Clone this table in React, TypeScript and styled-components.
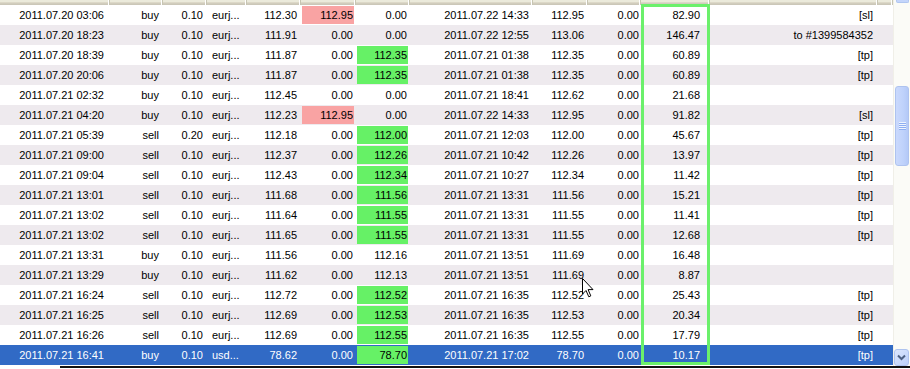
import styled, { createGlobalStyle } from 'styled-components';

type Mark = 'sl' | 'tp' | undefined;

interface Deal {
  open: string;
  type: string;
  size: string;
  symbol: string;
  price: string;
  sl: string;
  slMark?: boolean;
  tp: string;
  tpMark?: boolean;
  close: string;
  closePrice: string;
  swap: string;
  profit: string;
  comment: string;
}

const GlobalStyle = createGlobalStyle`
  html, body {
    margin: 0;
    padding: 0;
    background: #fff;
  }
  body {
    width: 910px;
    height: 369px;
    overflow: hidden;
    font-family: "Liberation Sans", Arial, sans-serif;
    font-size: 11px;
    color: #000;
  }
`;

const COLS = '110px 53px 44px 40px 54px 55px 54px 123px 55px 53px 69px 168px';

const d = (
  open: string, type: string, size: string, symbol: string, price: string,
  sl: string, tp: string, close: string, closePrice: string, profit: string,
  comment: string, mark?: Mark,
): Deal => ({
  open, type, size, symbol, price, sl, tp, close, closePrice,
  swap: '0.00', profit, comment,
  slMark: mark === 'sl', tpMark: mark === 'tp',
});

const deals: Deal[] = [
  d('2011.07.20 03:06', 'buy', '0.10', 'eurj...', '112.30', '112.95', '0.00', '2011.07.22 14:33', '112.95', '82.90', '[sl]', 'sl'),
  d('2011.07.20 18:23', 'buy', '0.10', 'eurj...', '111.91', '0.00', '0.00', '2011.07.22 12:55', '113.06', '146.47', 'to #1399584352'),
  d('2011.07.20 18:39', 'buy', '0.10', 'eurj...', '111.87', '0.00', '112.35', '2011.07.21 01:38', '112.35', '60.89', '[tp]', 'tp'),
  d('2011.07.20 20:06', 'buy', '0.10', 'eurj...', '111.87', '0.00', '112.35', '2011.07.21 01:38', '112.35', '60.89', '[tp]', 'tp'),
  d('2011.07.21 02:32', 'buy', '0.10', 'eurj...', '112.45', '0.00', '0.00', '2011.07.21 18:41', '112.62', '21.68', ''),
  d('2011.07.21 04:20', 'buy', '0.10', 'eurj...', '112.23', '112.95', '0.00', '2011.07.22 14:33', '112.95', '91.82', '[sl]', 'sl'),
  d('2011.07.21 05:39', 'sell', '0.20', 'eurj...', '112.18', '0.00', '112.00', '2011.07.21 12:03', '112.00', '45.67', '[tp]', 'tp'),
  d('2011.07.21 09:00', 'sell', '0.10', 'eurj...', '112.37', '0.00', '112.26', '2011.07.21 10:42', '112.26', '13.97', '[tp]', 'tp'),
  d('2011.07.21 09:04', 'sell', '0.10', 'eurj...', '112.43', '0.00', '112.34', '2011.07.21 10:27', '112.34', '11.42', '[tp]', 'tp'),
  d('2011.07.21 13:01', 'sell', '0.10', 'eurj...', '111.68', '0.00', '111.56', '2011.07.21 13:31', '111.56', '15.21', '[tp]', 'tp'),
  d('2011.07.21 13:02', 'sell', '0.10', 'eurj...', '111.64', '0.00', '111.55', '2011.07.21 13:31', '111.55', '11.41', '[tp]', 'tp'),
  d('2011.07.21 13:02', 'sell', '0.10', 'eurj...', '111.65', '0.00', '111.55', '2011.07.21 13:31', '111.55', '12.68', '[tp]', 'tp'),
  d('2011.07.21 13:31', 'buy', '0.10', 'eurj...', '111.56', '0.00', '112.16', '2011.07.21 13:51', '111.69', '16.48', ''),
  d('2011.07.21 13:29', 'buy', '0.10', 'eurj...', '111.62', '0.00', '112.13', '2011.07.21 13:51', '111.69', '8.87', ''),
  d('2011.07.21 16:24', 'sell', '0.10', 'eurj...', '112.72', '0.00', '112.52', '2011.07.21 16:35', '112.52', '25.43', '[tp]', 'tp'),
  d('2011.07.21 16:25', 'sell', '0.10', 'eurj...', '112.69', '0.00', '112.53', '2011.07.21 16:35', '112.53', '20.34', '[tp]', 'tp'),
  d('2011.07.21 16:26', 'sell', '0.10', 'eurj...', '112.69', '0.00', '112.55', '2011.07.21 16:35', '112.55', '17.79', '[tp]', 'tp'),
  d('2011.07.21 16:41', 'buy', '0.10', 'usd...', '78.62', '0.00', '78.70', '2011.07.21 17:02', '78.70', '10.17', '[tp]', 'tp'),
];

const SELECTED = 17;

export default function App() {
  return (
    <>
      <GlobalStyle />
      <Window>
        <Main>
          <ListArea>
            <Header>
              {Array.from({ length: 13 }).map((_, i) => <HeaderCell key={i} />)}
            </Header>
            {deals.map((r, i) => {
              const sel = i === SELECTED;
              return (
                <Row key={i} $alt={i % 2 === 1} $selected={sel}>
                  <Cell $pr={6}>{r.open}</Cell>
                  <Cell $pr={4}>{r.type}</Cell>
                  <Cell $pr={4}>{r.size}</Cell>
                  <Cell $align="left" $pl={5}>{r.symbol}</Cell>
                  <Cell $pr={4}>{r.price}</Cell>
                  {r.slMark ? (
                    <MarkCell><Marked $kind="sl">{r.sl}</Marked></MarkCell>
                  ) : (
                    <Cell $pr={3}>{r.sl}</Cell>
                  )}
                  {r.tpMark ? (
                    <MarkCell><Marked $kind="tp">{r.tp}</Marked></MarkCell>
                  ) : (
                    <Cell $pr={3}>{r.tp}</Cell>
                  )}
                  <Cell $pr={4}>{r.close}</Cell>
                  <Cell $pr={4}>{r.closePrice}</Cell>
                  <Cell $pr={2}>{r.swap}</Cell>
                  <Cell $pr={10}>{r.profit}</Cell>
                  <Cell $pr={5}>{r.comment}</Cell>
                </Row>
              );
            })}
            <ProfitFrame />
            <Cursor width="12" height="20" viewBox="0 0 12 20">
              <path d="M0.5 0.5 L0.5 16 L4 12.5 L6.8 18.8 L8.8 17.9 L6.1 11.6 L11 11.6 Z"
                fill="#fff" stroke="#000" strokeWidth="1" strokeLinejoin="miter" />
            </Cursor>
          </ListArea>
          <Scrollbar>
            <ArrowStub />
            <Thumb>
              <Grip><i /><i /><i /><i /></Grip>
            </Thumb>
            <TrackFill />
            <ArrowButton>
              <svg width="9" height="7" viewBox="0 0 9 7">
                <path d="M1 1.5 L4.5 5 L8 1.5" fill="none" stroke="#4D6185" strokeWidth="2" />
              </svg>
            </ArrowButton>
          </Scrollbar>
        </Main>
        <BottomEdge />
      </Window>
    </>
  );
}

const Window = styled.div`
  width: 910px;
  height: 369px;
  display: flex;
  flex-direction: column;
  background: #fff;
`;

const Main = styled.div`
  display: flex;
  height: 366px;
`;

const ListArea = styled.div`
  position: relative;
  width: 893px;
  height: 366px;
  overflow: hidden;
`;

const Header = styled.div`
  display: grid;
  grid-template-columns: ${COLS} 1fr;
  height: 5px;
  background: linear-gradient(#ebeadb 0, #ebeadb 2px, #e2decd 2px, #d6d2c2 3px, #cbc7b8 4px);
`;

const HeaderCell = styled.div`
  border-right: 1px solid #c7c5b2;
  box-shadow: inset -2px 0 0 -1px #fff;
`;

const Row = styled.div<{ $alt: boolean; $selected: boolean }>`
  display: grid;
  grid-template-columns: ${COLS};
  height: 20px;
  background: ${(p) => (p.$selected ? '#316ac5' : p.$alt ? '#eeeaee' : '#fff')};
  color: ${(p) => (p.$selected ? '#fff' : '#000')};
`;

const Cell = styled.div<{ $align?: 'left' | 'right'; $pr?: number; $pl?: number }>`
  line-height: 20px;
  white-space: nowrap;
  overflow: hidden;
  text-align: ${(p) => p.$align ?? 'right'};
  padding-right: ${(p) => p.$pr ?? 0}px;
  padding-left: ${(p) => p.$pl ?? 0}px;
`;

const MarkCell = styled.div`
  padding: 1px 2px 1px 1px;
`;

const Marked = styled.div<{ $kind: 'sl' | 'tp' }>`
  height: 18px;
  line-height: 18px;
  text-align: right;
  padding-right: 1px;
  color: #000;
  background: ${(p) => (p.$kind === 'sl' ? '#f9a3a3' : '#66f166')};
`;

const ProfitFrame = styled.div`
  position: absolute;
  left: 641px;
  top: 4px;
  width: 69px;
  height: 361px;
  box-sizing: border-box;
  border: 3px solid #6bf06b;
  pointer-events: none;
`;

const Cursor = styled.svg`
  position: absolute;
  left: 582px;
  top: 278px;
`;

const Scrollbar = styled.div`
  width: 17px;
  height: 366px;
  display: flex;
  flex-direction: column;
  align-items: flex-end;
  padding-right: 1px;
  box-sizing: border-box;
  background: #fbfbf7;
  border-left: 1px solid #f0efe8;
`;

const ArrowStub = styled.div`
  width: 13px;
  height: 3px;
  background: #c4d5fb;
  border: 1px solid #b0c6f0;
  border-top: none;
  border-radius: 0 0 2px 2px;
  box-sizing: border-box;
`;

const Thumb = styled.div`
  margin-top: 83px;
  width: 14px;
  height: 80px;
  box-sizing: border-box;
  border: 1px solid #aec3ef;
  border-radius: 3px;
  background: linear-gradient(to right, #cad9fd, #bfd2fb 60%, #b4c9f7);
  display: flex;
  align-items: center;
  justify-content: center;
`;

const Grip = styled.div`
  display: flex;
  flex-direction: column;
  gap: 1px;
  i {
    display: block;
    width: 7px;
    height: 1px;
    background: #8eaef2;
    box-shadow: 0 -1px 0 #eef4fe;
  }
`;

const TrackFill = styled.div`
  flex: 1;
`;

const ArrowButton = styled.div`
  width: 15px;
  height: 17px;
  box-sizing: border-box;
  border: 1px solid #aec3ef;
  border-radius: 3px;
  background: linear-gradient(135deg, #dbe6fe, #bcd0fa);
  display: flex;
  align-items: center;
  justify-content: center;
`;

const BottomEdge = styled.div`
  height: 2px;
  margin-left: 60px;
  background: #111;
`;
